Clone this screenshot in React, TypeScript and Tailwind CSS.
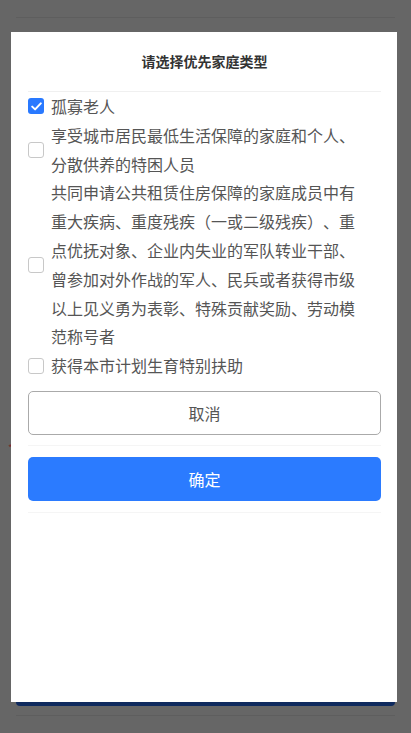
import React, { useState } from 'react';

const options = [
  '孤寡老人',
  '享受城市居民最低生活保障的家庭和个人、分散供养的特困人员',
  '共同申请公共租赁住房保障的家庭成员中有重大疾病、重度残疾（一或二级残疾）、重点优抚对象、企业内失业的军队转业干部、曾参加对外作战的军人、民兵或者获得市级以上见义勇为表彰、特殊贡献奖励、劳动模范称号者',
  '获得本市计划生育特别扶助',
];

function CheckBox({ checked }: { checked: boolean }) {
  if (checked) {
    return (
      <span className="flex h-[16px] w-[16px] shrink-0 items-center justify-center rounded-[3px] bg-[#2979ff]">
        <svg width="11" height="9" viewBox="0 0 11 9" fill="none">
          <path d="M1.2 4.6L4.1 7.4L9.8 1.4" stroke="white" strokeWidth="2" strokeLinecap="round" strokeLinejoin="round" />
        </svg>
      </span>
    );
  }
  return <span className="h-[16px] w-[16px] shrink-0 rounded-[3px] border border-[#c8c8c8] bg-white" />;
}

export default function App() {
  const [selected, setSelected] = useState<number[]>([0]);

  const toggle = (i: number) => {
    setSelected((s) => (s.includes(i) ? s.filter((x) => x !== i) : [...s, i]));
  };

  return (
    <div
      className="relative h-[733px] w-[411px] overflow-hidden bg-[#666666] [text-spacing-trim:space-all]"
      style={{ fontFamily: '"Noto Sans CJK SC", "Noto Sans", sans-serif' }}
    >
      {/* page behind the overlay */}
      <div className="flex h-full flex-col px-[16px] pt-[17px]">
        <div className="h-px bg-[#5e5e5e]" />
        <div className="mt-[425px] -ml-[8px] text-[10px] leading-none text-[#7a2a2a]">*</div>
        <div className="flex-1" />
        <div className="mb-[9px] h-[4px] rounded-b-[4px] bg-[#0f2a5e]" />
        <div className="mb-[17px] h-px bg-[#5e5e5e]" />
      </div>

      {/* dialog */}
      <div className="absolute left-[11px] top-[32px] flex h-[670px] w-[386px] flex-col bg-white pl-[17px] pr-[16px]">
        <div className="flex h-[59px] items-center justify-center text-[14px] font-bold text-[#333333]">
          请选择优先家庭类型
        </div>
        <div className="h-px bg-[#f0f0f0]" />

        <div className="flex flex-col">
          {options.map((text, i) => (
            <label key={i} className="flex cursor-pointer items-center gap-[7px]" onClick={() => toggle(i)}>
              <CheckBox checked={selected.includes(i)} />
              <span className="max-w-[312px] text-[16px] leading-[28.8px] text-[#555555]">{text}</span>
            </label>
          ))}
        </div>

        <button className="mt-[11px] h-[44px] w-full rounded-[5px] border border-[#aaaaaa] bg-white text-[16px] text-[#555555]">
          取消
        </button>
        <div className="mt-[10px] h-px bg-[#f5f5f5]" />
        <button className="mt-[11px] h-[44px] w-full rounded-[5px] bg-[#2b7bff] text-[16px] text-white">
          确定
        </button>
        <div className="mt-[11px] h-px bg-[#f5f5f5]" />
      </div>
    </div>
  );
}
